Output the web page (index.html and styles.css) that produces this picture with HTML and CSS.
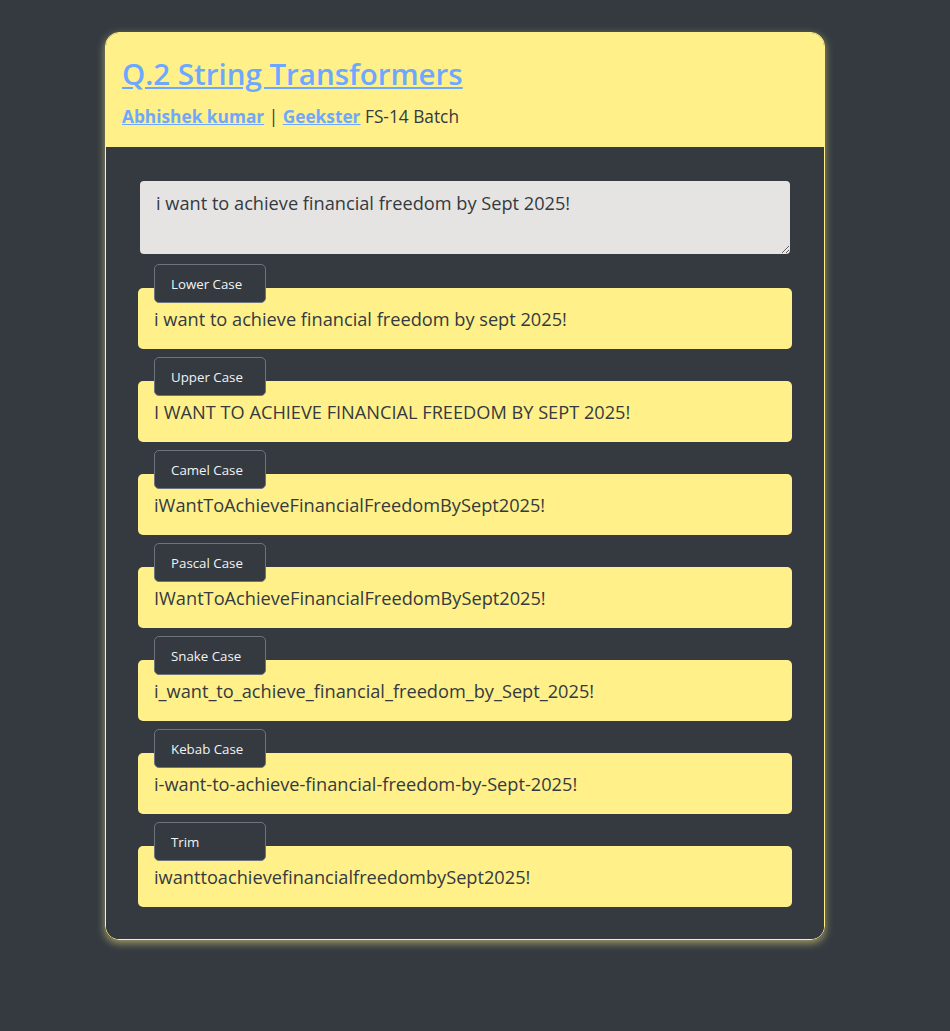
FILE: index.html
```html
<!DOCTYPE html>
<html lang="en">
<head>
<meta charset="utf-8">
<title>String Transformers</title>
<link rel="stylesheet" href="styles.css">
</head>
<body>
<div class="page">
  <div class="card">
    <div class="card-header">
      <h1 class="title"><a href="#">Q.2 String Transformers</a></h1>
      <p class="sub"><a href="#">Abhishek kumar</a> | <a href="#">Geekster</a> FS-14 Batch</p>
    </div>
    <div class="card-body">
      <textarea class="input">i want to achieve financial freedom by Sept 2025!</textarea>
      <div class="list">
        <div class="item"><button class="btn">Lower Case</button><div class="out">i want to achieve financial freedom by sept 2025!</div></div>
        <div class="item"><button class="btn">Upper Case</button><div class="out">I WANT TO ACHIEVE FINANCIAL FREEDOM BY SEPT 2025!</div></div>
        <div class="item"><button class="btn">Camel Case</button><div class="out">iWantToAchieveFinancialFreedomBySept2025!</div></div>
        <div class="item"><button class="btn">Pascal Case</button><div class="out">IWantToAchieveFinancialFreedomBySept2025!</div></div>
        <div class="item"><button class="btn">Snake Case</button><div class="out">i_want_to_achieve_financial_freedom_by_Sept_2025!</div></div>
        <div class="item"><button class="btn">Kebab Case</button><div class="out">i-want-to-achieve-financial-freedom-by-Sept-2025!</div></div>
        <div class="item"><button class="btn">Trim</button><div class="out">iwanttoachievefinancialfreedombySept2025!</div></div>
      </div>
    </div>
  </div>
</div>
</body>
</html>
```

FILE: styles.css
```css
* { box-sizing: border-box; }
html, body { margin: 0; padding: 0; }
body {
  background: #343a40;
  font-family: "Open Sans", "Noto Sans", sans-serif;
  color: #343a40;
  min-height: 1031px;
}
.page {
  padding: 32px 0 0 105px;
}
.card {
  width: 720px;
  border: 1px solid #fff08a;
  border-radius: 14px;
  overflow: hidden;
  box-shadow: 0 3px 8px rgba(255, 240, 138, 0.55);
}
.card-header {
  background: #fff08a;
  padding: 21px 16px 16px;
  height: 114px;
}
.title {
  margin: 0;
  font-size: 29.5px;
  font-weight: 600;
  line-height: 40px;
}
.title a, .sub a {
  color: #6ea8fe;
  text-decoration: underline;
}
.sub {
  margin: 10px 0 0;
  font-size: 17.3px;
  line-height: 26px;
  color: #343a40;
}
.sub a { font-weight: 700; }
.card-body {
  background: #343a40;
  padding: 34px 32px 32px;
}
.input {
  display: block;
  width: 650px;
  height: 73px;
  margin: 0 2px;
  background: #e6e4e2;
  border: 0;
  border-radius: 4px;
  padding: 10px 16px;
  font-family: inherit;
  font-size: 18.2px;
  line-height: 24px;
  color: #343a40;
  resize: vertical;
}
.list {
  display: flex;
  flex-direction: column;
  gap: 8px;
  margin-top: 10px;
}
.item {
  display: flex;
  flex-direction: column;
  align-items: flex-start;
}
.btn {
  position: relative;
  z-index: 1;
  margin-left: 16px;
  width: 112px;
  height: 39px;
  background: #343a40;
  border: 1px solid #6c757d;
  border-radius: 5px;
  color: #f1f3f5;
  font-family: inherit;
  font-size: 13.3px;
  text-align: left;
  padding: 0 16px;
}
.out {
  align-self: stretch;
  margin-top: -15px;
  background: #fff08a;
  border-radius: 5px;
  height: 61px;
  padding: 18px 16px 0;
  font-size: 18.2px;
  line-height: 27px;
  color: #343a40;
}
```
